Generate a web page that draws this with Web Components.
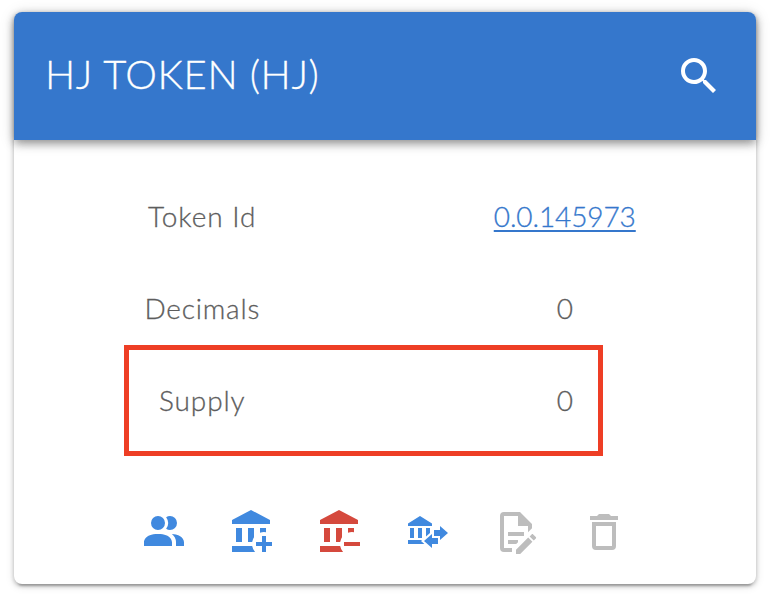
<!DOCTYPE html>
<html lang="en">
<head>
<meta charset="utf-8">
<title>HJ TOKEN</title>
<style>
html,body{margin:0;background:#fff}
body{height:602px;overflow:hidden;font-family:Lato,"Liberation Sans",sans-serif;font-weight:300;-webkit-text-stroke-width:.3px}
</style>
</head>
<body>
<token-card>
  <card-header slot="header">HJ TOKEN (HJ)</card-header>
  <token-row><span style="letter-spacing:.95px">Token Id</span><a slot="value" href="#">0.0.145973</a></token-row>
  <token-row><span style="letter-spacing:.8px">Decimals</span><span slot="value">0</span></token-row>
  <token-row marked><span style="letter-spacing:.9px">Supply</span><span slot="value">0</span></token-row>
  <mdi-icon slot="actions" name="people"></mdi-icon>
  <mdi-icon slot="actions" name="mint"></mdi-icon>
  <mdi-icon slot="actions" name="burn"></mdi-icon>
  <mdi-icon slot="actions" name="transfer"></mdi-icon>
  <mdi-icon slot="actions" name="edit"></mdi-icon>
  <mdi-icon slot="actions" name="remove"></mdi-icon>
</token-card>
<script>
const bank = "M11.5 1L2 6V8H21V6ZM4 10H7V17H4ZM10 10H13V14.68A6 6 0 0 0 12.08 17H10ZM16 10H19V12.08A6 6 0 0 0 16 12.34ZM2 19H12.08A6 6 0 0 0 13.53 22H2Z";
const icons = {
  search: ["#fff", "M9.5 3A6.5 6.5 0 0 1 16 9.5C16 11.11 15.41 12.59 14.44 13.73L14.71 14H15.5L20.5 19L19 20.5L14 15.5V14.71L13.73 14.44C12.59 15.41 11.11 16 9.5 16A6.5 6.5 0 0 1 9.5 3M9.5 5C7 5 5 7 5 9.5S7 14 9.5 14 14 12 14 9.5 12 5 9.5 5Z"],
  people: ["#4089df", "M16 17V19H2V17S2 13 9 13 16 17 16 17M12.5 7.5A3.5 3.5 0 1 0 9 11A3.5 3.5 0 0 0 12.5 7.5M15.94 13A5.32 5.32 0 0 1 18 17V19H22V17S22 13.37 15.94 13M15 4A3.39 3.39 0 0 0 13.07 4.59A5 5 0 0 1 13.07 10.41A3.39 3.39 0 0 0 15 11A3.5 3.5 0 0 0 15 4Z"],
  mint: ["#4089df", bank + "M17 14H19V17H22V19H19V22H17V19H14V17H17Z"],
  burn: ["#d5493d", bank + "M14 17H22V19H14Z"],
  transfer: ["#4089df", "M15 14V11H18V9L22 12.5L18 16V14H15M14 7.7V9H2V7.7L8 4L14 7.7M7 10H9V15H7V10M3 10H5V15H3V10M13 10V12.5L11 14.3V10H13M9.1 16L8.5 16.5L10.2 18H2V16H9.1M17 15V18H14V20L10 16.5L14 13V15H17Z"],
  edit: ["#bdbdbd", "M8 12H16V14H8V12M10 20H6V4H13V9H18V12.1L20 10.1V8L14 2H6A2 2 0 0 0 4 4V20A2 2 0 0 0 6 22H10V20M8 18H12.1L13 17.1V16H8V18M20.2 13C20.3 13 20.5 13.1 20.6 13.2L21.9 14.5C22.1 14.7 22.1 15.1 21.9 15.3L20.9 16.3L18.8 14.2L19.8 13.2C19.9 13.1 20 13 20.2 13M20.2 16.9L14.1 23H12V20.9L18.1 14.8L20.2 16.9Z"],
  remove: ["#bdbdbd", "M6 19A2 2 0 0 0 8 21H16A2 2 0 0 0 18 19V7H6V19M8 9H16V19H8V9M15.5 4L14.5 3H9.5L8.5 4H5V6H19V4H15.5Z"]
};
const define = (tag, html) => customElements.define(tag, class extends HTMLElement {
  constructor() {
    super();
    this.attachShadow({mode: "open"}).innerHTML = typeof html === "function" ? html(this) : html;
  }
});
define("mdi-icon", el => {
  const [color, path] = icons[el.getAttribute("name")];
  return `<style>:host{display:block;width:48px;height:48px;flex:none}svg{display:block}</style>
  <svg width="48" height="48" viewBox="0 0 24 24" fill="${color}"><path d="${path}"/></svg>`;
});
define("card-header", `<style>
:host{display:flex;align-items:center;justify-content:space-between;box-sizing:border-box;height:128px;padding:0 33px 0 31px;background:#3577cc;color:#fff;border-radius:8px 8px 0 0;font-size:40px;letter-spacing:.6px;box-shadow:0 4px 8px -2px rgba(0,0,0,.2),0 4px 10px rgba(0,0,0,.22),0 2px 16px rgba(0,0,0,.14)}
span{padding-bottom:5px}
</style><span><slot></slot></span><mdi-icon name="search"></mdi-icon>`);
define("token-row", `<style>
:host{display:grid;grid-template-columns:1fr 1fr;align-items:center;justify-items:center;height:92px;position:relative;font-size:28px;color:#5d5d5d}
:host([marked])::after{content:"";position:absolute;left:103px;top:-9px;width:469px;height:101px;border:5px solid #ee3e25}
::slotted(a){color:#3577cc;letter-spacing:-.1px;text-decoration-thickness:2px;text-underline-offset:3px;text-decoration-skip-ink:none}
</style><slot></slot><slot name="value"></slot>`);
define("token-card", `<style>
:host{display:flow-root;box-sizing:border-box;width:742px;height:572px;margin:12px 0 0 14px;border-radius:8px;background:#fff;box-shadow:0 6px 2px -4px rgba(0,0,0,.2),0 2px 4px rgba(0,0,0,.24),0 2px 10px rgba(0,0,0,.12)}
.rows{padding:30px 10px 0 7px}
.actions{display:flex;gap:40px;padding:62px 0 0 126px}
</style><slot name="header"></slot><div class="rows"><slot></slot></div><div class="actions"><slot name="actions"></slot></div>`);
</script>
</body>
</html>
